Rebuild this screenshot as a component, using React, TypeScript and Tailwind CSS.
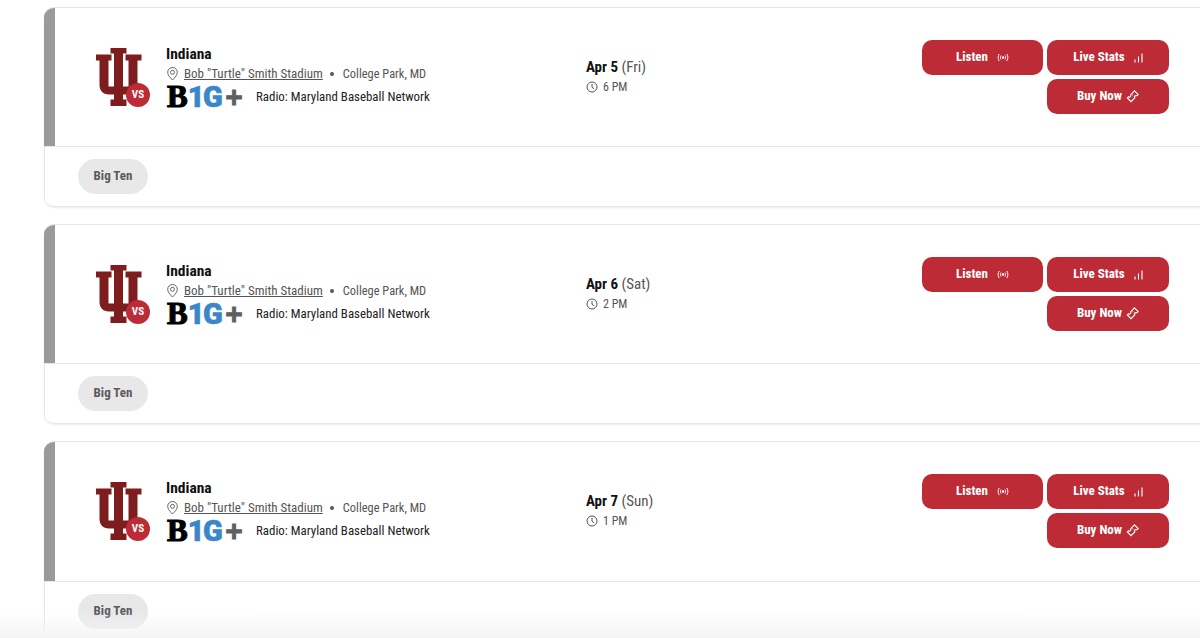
import React from "react";

const font = { fontFamily: '"Roboto Condensed", "Roboto", sans-serif' };

function IULogo() {
  return (
    <svg width="46" height="60" viewBox="0 0 46 60" className="block">
      <path
        fill="#7e1d1d"
        d="M14.500 0H30.500V5.500H27V38.500H32.500V12.500H29.500V6.500H45.500V12.500H41.500V37C41.500 42.500 38 46.500 32 46.500H27V51.500H30.500V58H14.500V51.500H18V46.500H13C7 46.500 3.500 42.500 3.500 37V12.500H0V6.500H15.500V12.500H12.500V38.500H18V5.500H14.500Z"
      />
    </svg>
  );
}

function PinIcon() {
  return (
    <svg width="11" height="14" viewBox="0 0 11 14" fill="none" stroke="#555" strokeWidth="0.9">
      <path d="M5.500 13C3 10.500 0.700 8 0.700 5.300A4.800 4.800 0 0 1 10.300 5.300C10.300 8 8 10.500 5.500 13Z" />
      <circle cx="5.500" cy="5.300" r="2" />
    </svg>
  );
}

function ClockIcon() {
  return (
    <svg width="12" height="12" viewBox="0 0 12 12" fill="none" stroke="#555" strokeWidth="1">
      <circle cx="6" cy="6" r="5" />
      <path d="M6 3V6.300L8.200 7.800" />
    </svg>
  );
}

function RadioIcon() {
  return (
    <svg width="12" height="9" viewBox="0 0 12 9" fill="none" stroke="#fff" strokeWidth="1">
      <circle cx="6" cy="4.500" r="1.200" fill="#fff" stroke="none" />
      <path d="M4 2.500C3.300 3.700 3.300 5.300 4 6.500M8 2.500C8.700 3.700 8.700 5.300 8 6.500M2.200 1C0.800 3 0.800 6 2.200 8M9.800 1C11.200 3 11.200 6 9.800 8" />
    </svg>
  );
}

function BarsIcon() {
  return (
    <svg width="9" height="10" viewBox="0 0 9 10" fill="none" stroke="#fff" strokeWidth="1.100">
      <path d="M1 9.500V6.500M4.500 9.500V3.500M8 9.500V0.500" />
    </svg>
  );
}

function TicketIcon() {
  return (
    <svg width="13" height="13" viewBox="0 0 13 13" fill="none" stroke="#fff" strokeWidth="1.100">
      <path d="M8.500 0.800L12.200 4.500L10.900 5.800C10.300 5.400 9.500 5.500 9 6C8.500 6.500 8.400 7.300 8.800 7.900L5 11.700L1.300 8L2.500 6.800C3.100 7.200 3.900 7.100 4.400 6.600C4.900 6.100 5 5.300 4.600 4.700Z" />
      <path d="M6.500 4.500L7 5M8 6L8.500 6.500" />
    </svg>
  );
}

function RedButton({ label, icon, classes }: { label: string; icon: React.ReactNode; classes: string }) {
  return (
    <div className={`flex h-[35px] items-center justify-center rounded-[10px] bg-[#bd2c36] text-[13px] font-bold text-white ${classes}`}>
      <span className="pb-[2px]">{label}</span>
      {icon}
    </div>
  );
}

function Big1G() {
  return (
    <div className="ml-[1px] flex h-[24px] w-[77px] items-center text-[31px] leading-[24px] font-black">
      <span className="text-black [-webkit-text-stroke:1.2px_#000]" style={{ fontFamily: '"Liberation Serif", serif' }}>B</span>
      <span className="text-[29px] tracking-[-1.5px] text-[#3a87c8] [-webkit-text-stroke:0.6px_#3a87c8]" style={{ fontFamily: '"Roboto", sans-serif' }}>1G</span>
      <span className="ml-[4px] text-[30px] text-[#5f5f5f] [-webkit-text-stroke:0.8px_#5f5f5f]" style={{ fontFamily: '"Liberation Sans", sans-serif' }}>+</span>
    </div>
  );
}

function Card({ date, day, time, topClass }: { date: string; day: string; time: string; topClass: string }) {
  return (
    <div className="mr-[-30px] h-[200px] shrink-0 overflow-hidden rounded-[10px] border-y border-r border-[#e6e6e6] bg-white shadow-[0_1px_2px_rgba(0,0,0,0.08)]">
      <div className={`flex border-l-[11px] border-[#9a9a9a] ${topClass}`}>
        <div className="relative ml-[41px] mt-[40px] h-[60px] w-[46px] shrink-0">
          <IULogo />
          <div className="absolute left-[30px] top-[35px] flex h-[24px] w-[24px] items-center justify-center rounded-full bg-[#bd2c36] text-[11px] font-bold text-white">
            VS
          </div>
        </div>
        <div className="ml-[24px] mt-[37px] w-[420px] shrink-0">
          <div className="text-[15.500px] leading-[18px] font-bold text-[#111]">Indiana</div>
          <div className="mt-[2px] flex h-[18px] items-center text-[13px] text-[#555]">
            <span className="ml-[1px] flex">
              <PinIcon />
            </span>
            <span className="ml-[6px] underline">Bob "Turtle" Smith Stadium</span>
            <span className="ml-[7px] h-[4px] w-[4px] rounded-full bg-[#555]" />
            <span className="ml-[9px] text-[12.400px]">College Park, MD</span>
          </div>
          <div className="mt-[2px] flex h-[24px] items-center">
            <Big1G />
            <span className="ml-[12px] text-[12.900px] text-[#222]">Radio: Maryland Baseball Network</span>
          </div>
        </div>
        <div className="mt-[50px] w-[336px] shrink-0">
          <div className="text-[15px] leading-[18px] text-[#555]">
            <span className="font-bold text-[#111]">{date}</span> ({day})
          </div>
          <div className="mt-[3px] flex items-center gap-[5px] text-[12px] leading-[16px] text-[#555]">
            <ClockIcon />
            <span>{time}</span>
          </div>
        </div>
        <div className="mt-[32px] flex w-[247px] shrink-0 flex-wrap content-start justify-end gap-x-[4px] gap-y-[4px]">
          <RedButton label="Listen" classes="w-[121px] gap-[9px]" icon={<RadioIcon />} />
          <RedButton label="Live Stats" classes="w-[122px] gap-[9px]" icon={<BarsIcon />} />
          <RedButton label="Buy Now" classes="w-[122px] gap-[4px]" icon={<TicketIcon />} />
        </div>
      </div>
      <div className="h-[60px] border-t border-l border-[#e6e6e6] pl-[33px] pt-[12px]">
        <div className="flex h-[35px] w-[70px] items-center justify-center rounded-full bg-[#e8e8e8] pb-[2px] text-[13px] font-bold text-[#5a5a5a]">
          Big Ten
        </div>
      </div>
    </div>
  );
}

export default function App() {
  return (
    <div className="relative h-[638px] w-[1200px] overflow-hidden bg-white pl-[44px] pt-[7px]" style={font}>
      <div className="flex flex-col gap-[17px]">
        <Card date="Apr 5" day="Fri" time="6 PM" topClass="h-[138px]" />
        <Card date="Apr 6" day="Sat" time="2 PM" topClass="h-[138px]" />
        <Card date="Apr 7" day="Sun" time="1 PM" topClass="h-[139px]" />
      </div>
      <div className="absolute inset-x-0 bottom-0 h-[26px] bg-gradient-to-b from-transparent to-[#f4f4f4]" />
    </div>
  );
}
